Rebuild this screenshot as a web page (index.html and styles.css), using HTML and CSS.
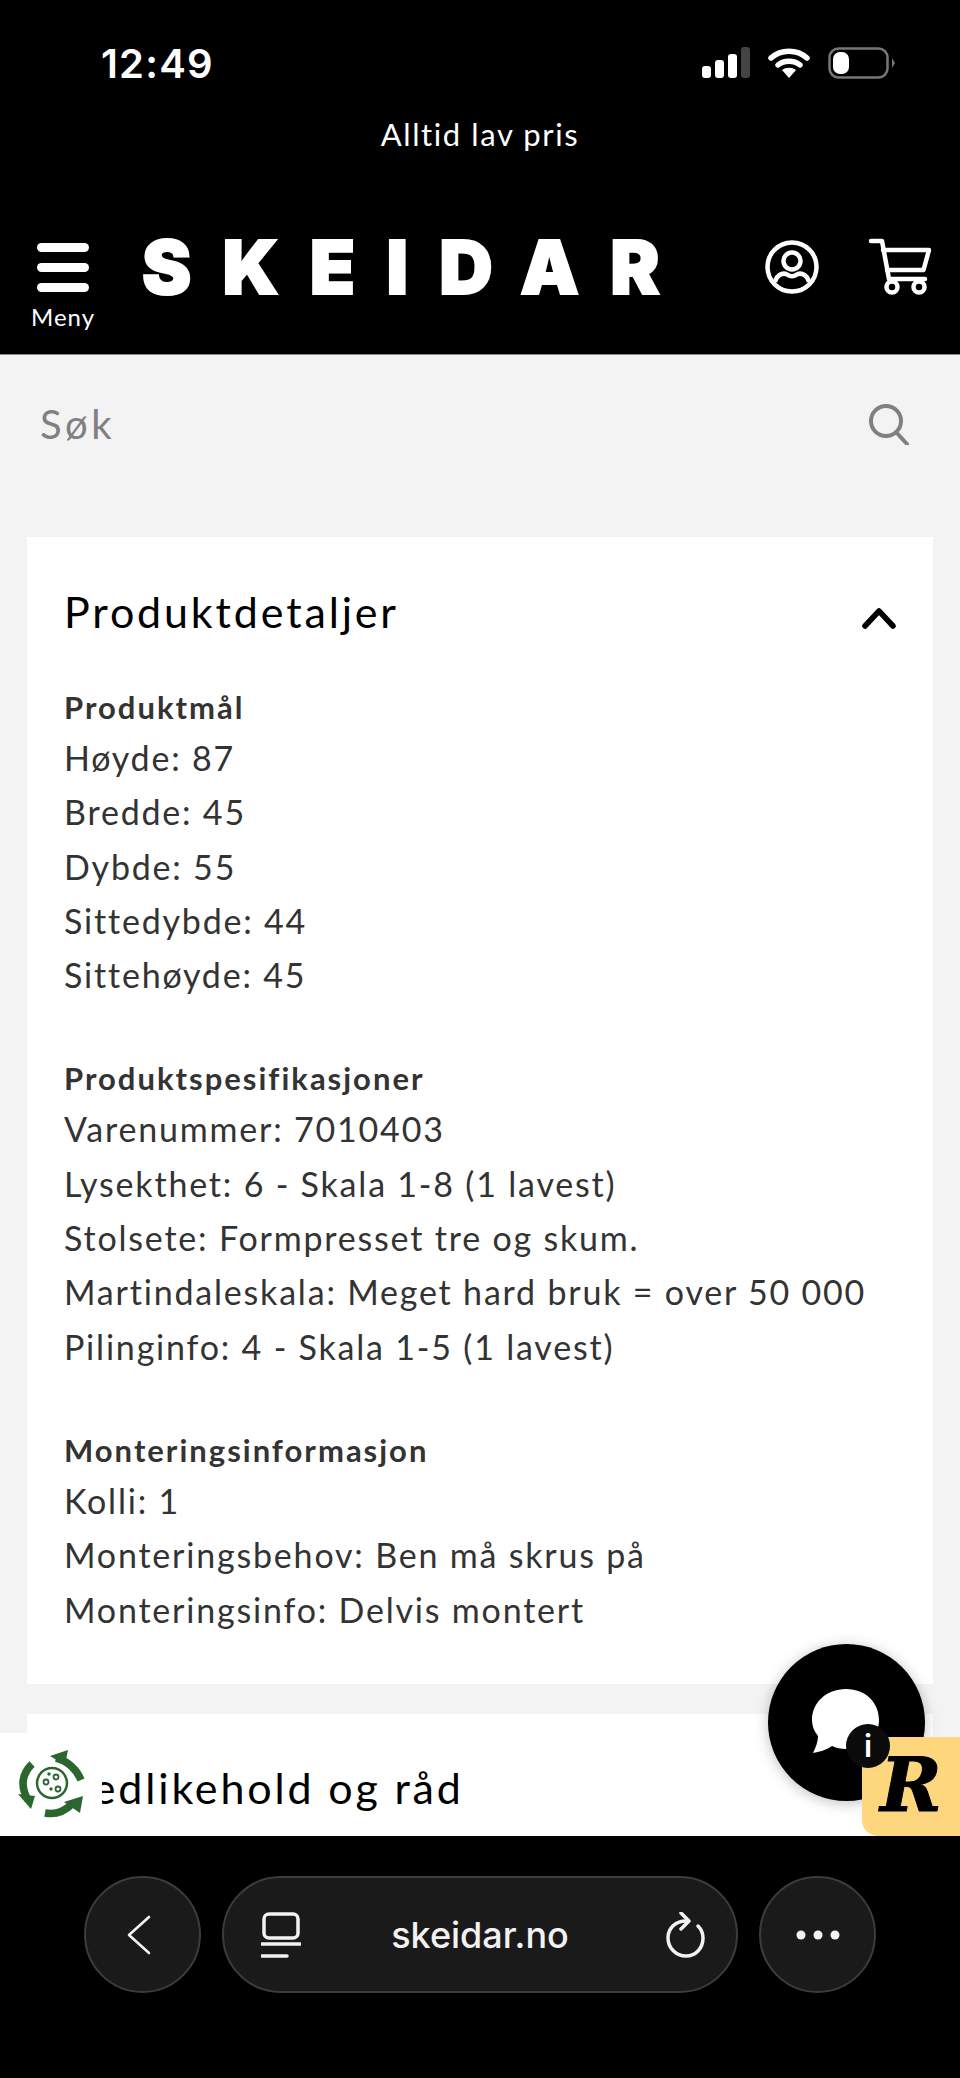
FILE: index.html
```html
<!DOCTYPE html>
<html lang="no">
<head>
<meta charset="utf-8">
<title>Skeidar</title>
<link rel="stylesheet" href="styles.css">
</head>
<body>
<div class="phone">
  <header class="top">
    <div class="status">
      <span class="time">12:49</span>
      <div class="status-icons">
        <svg class="signal" width="50" height="34" viewBox="0 0 50 34"><rect x="0" y="20" width="9" height="12" rx="3" fill="#fff"/><rect x="13" y="14" width="9" height="18" rx="3" fill="#fff"/><rect x="26" y="8" width="9" height="24" rx="3" fill="#fff"/><rect x="39" y="1" width="9" height="31" rx="3" fill="#444"/></svg>
        <svg class="wifi" width="42" height="32" viewBox="0 0 42 32"><path d="M3 11C13 2 29 2 39 11" fill="none" stroke="#fff" stroke-width="5.5" stroke-linecap="round"/><path d="M10 18C16 13 26 13 32 18" fill="none" stroke="#fff" stroke-width="5.5" stroke-linecap="round"/><path d="M14 23C18 20 24 20 28 23L21 31Z" fill="#fff"/></svg>
        <svg class="battery" width="68" height="32" viewBox="0 0 68 32"><rect x="1.5" y="1.5" width="58" height="29" rx="9" fill="none" stroke="#777" stroke-width="2.5"/><rect x="5" y="5" width="16" height="22" rx="7" fill="#fff"/><path d="M64 11L67 16L64 21Z" fill="#777"/></svg>
      </div>
    </div>
    <div class="promo">Alltid lav pris</div>
    <div class="brandbar">
      <div class="menu">
        <span class="bars"><i></i><i></i><i></i></span>
        <span class="menu-label">Meny</span>
      </div>
      <div class="logo">SKEIDAR</div>
      <svg class="profile" width="56" height="56" viewBox="0 0 56 56" fill="none" stroke="#fff" stroke-width="4.5"><circle cx="28" cy="28" r="24.5"/><circle cx="28" cy="22" r="8.5"/><path d="M11 43C13 35 20 33 24 36C26 37.500 30 37.500 32 36C36 33 43 35 45 43"/></svg>
      <svg class="cart" width="66" height="60" viewBox="0 0 66 60" fill="none" stroke="#fff" stroke-width="4.5" stroke-linejoin="round" stroke-linecap="round"><path d="M3 3H14L21 41H57"/><path d="M15 12H61L55.500 32H19"/><circle cx="24" cy="49" r="5.500"/><circle cx="51" cy="49" r="5.500"/></svg>
    </div>
  </header>

  <main class="content">
    <div class="search">
      <span class="search-label">Søk</span>
      <svg width="42" height="42" viewBox="0 0 42 42" fill="none" stroke="#808080" stroke-width="4"><circle cx="18" cy="18" r="15"/><path d="M28 29L39 41" stroke-linecap="round"/></svg>
    </div>

    <section class="card">
      <div class="card-head">
        <h2>Produktdetaljer</h2>
        <svg class="chevron" width="36" height="22" viewBox="0 0 36 22" fill="none" stroke="#000" stroke-width="5.500" stroke-linecap="round" stroke-linejoin="round"><path d="M4 19L18 4L32 19"/></svg>
      </div>
      <div class="spec">
        <h3>Produktmål</h3>
        <p>Høyde: 87</p>
        <p>Bredde: 45</p>
        <p>Dybde: 55</p>
        <p>Sittedybde: 44</p>
        <p>Sittehøyde: 45</p>
      </div>
      <div class="spec">
        <h3>Produktspesifikasjoner</h3>
        <p>Varenummer: 7010403</p>
        <p>Lysekthet: 6 - Skala 1-8 (1 lavest)</p>
        <p>Stolsete: Formpresset tre og skum.</p>
        <p>Martindaleskala: Meget hard bruk = over 50 000</p>
        <p>Pilinginfo: 4 - Skala 1-5 (1 lavest)</p>
      </div>
      <div class="spec">
        <h3>Monteringsinformasjon</h3>
        <p>Kolli: 1</p>
        <p>Monteringsbehov: Ben må skrus på</p>
        <p>Monteringsinfo: Delvis montert</p>
      </div>
    </section>

    <section class="card">
      <div class="card-head">
        <h2>Vedlikehold og råd</h2>
      </div>
    </section>

    <div class="eco">
      <svg width="68" height="68" viewBox="0 0 68 68" fill="none" stroke="#2b662f">
        <g stroke-width="7.500">
          <path d="M38 8C50 11 59 20 63 30"/>
          <path d="M14 14C4 24 2 36 10 50"/>
          <path d="M27 63C38 65 46 62 54 54"/>
        </g>
        <g fill="#2b662f" stroke="none">
          <path d="M32 6L50 0L47 15Z"/>
          <path d="M0 44L17 46L13 59Z"/>
          <path d="M65 46L62 63L46 52Z"/>
        </g>
        <circle cx="34" cy="33" r="15" stroke-width="2.500"/>
        <g stroke-width="1.800">
          <circle cx="28" cy="32" r="2.500"/>
          <circle cx="38" cy="27" r="2.500"/>
          <circle cx="40" cy="39" r="2.500"/>
          <circle cx="31" cy="24" r="0.800"/>
          <circle cx="33" cy="39" r="0.800"/>
        </g>
      </svg>
    </div>

    <div class="chat">
      <svg width="76" height="74" viewBox="0 0 76 74"><path d="M38 3C58 3 71 17 71 34C71 51 57 63 38 63C33 63 28 62 24 60C18 64 11 66 5 67C8 61 10 55 10 50C6 45 4 40 4 34C4 17 18 3 38 3Z" fill="#fff"/></svg>
    </div>
    <div class="review">R</div>
    <div class="info">i</div>
  </main>

  <footer class="browser">
    <button class="round back" aria-label="Tilbake">
      <svg width="24" height="40" viewBox="0 0 24 40" fill="none" stroke="#f2f2f2" stroke-width="2.600" stroke-linecap="round" stroke-linejoin="round"><path d="M22 2L2 20L22 38"/></svg>
    </button>
    <div class="address">
      <svg width="40" height="46" viewBox="0 0 40 46" fill="none" stroke="#f2f2f2" stroke-width="3.500"><rect x="3" y="2" width="34" height="24" rx="5"/><path d="M1 32H39" stroke-linecap="round"/><path d="M1 44H26" stroke-linecap="round"/></svg>
      <span class="url">skeidar.no</span>
      <svg width="40" height="46" viewBox="0 0 40 46" fill="none" stroke="#f2f2f2" stroke-width="3.500" stroke-linecap="round" stroke-linejoin="round"><path d="M22 9C10 8 2 16 2 26C2 36 10 44 20 44C30 44 37 36 37 26C37 21 35 17 32 14"/><path d="M15 1L23 9L15 17"/></svg>
    </div>
    <button class="round" aria-label="Mer">
      <svg width="44" height="12" viewBox="0 0 44 12" fill="#f2f2f2"><circle cx="5" cy="6" r="4.500"/><circle cx="22" cy="6" r="4.500"/><circle cx="39" cy="6" r="4.500"/></svg>
    </button>
  </footer>
</div>
</body>
</html>
```

FILE: styles.css
```css
* { box-sizing: border-box; }
html, body { margin: 0; padding: 0; }
body { background: #000; font-family: "Lato", "Noto Sans", sans-serif; }
.phone { width: 960px; height: 2078px; display: flex; flex-direction: column; overflow: hidden; }

.top { height: 355px; background: #000; color: #fff; flex: none; border-bottom: 1px solid #888; }
.status { height: 100px; padding: 26px 0 0 101px; display: flex; align-items: center; justify-content: space-between; }
.time { font-family: "Inter", sans-serif; font-weight: 600; font-size: 40px; letter-spacing: 1.2px; }
.status-icons { display: flex; align-items: center; margin-right: 64px; }
.signal { margin-right: 16px; }
.wifi { margin-right: 18px; }
.promo { height: 70px; display: flex; align-items: center; justify-content: center; font-size: 31px; font-weight: 400; letter-spacing: 1.6px; padding-bottom: 2px; }
.brandbar { margin-top: 64px; padding-left: 31px; display: flex; align-items: flex-start; }
.menu { width: 64px; display: flex; flex-direction: column; align-items: center; }
.bars { display: flex; flex-direction: column; gap: 11px; margin-top: 9px; }
.bars i { display: block; width: 52px; height: 9px; border-radius: 5px; background: #fff; }
.menu-label { font-size: 24px; line-height: 30px; margin-top: 10px; letter-spacing: 1px; }
.logo { margin-left: 47px; margin-top: 2px; width: 622px; font-family: "Inter", sans-serif; font-weight: 900; font-size: 74px; line-height: 62px; letter-spacing: 31.2px; white-space: nowrap; -webkit-text-stroke: 2px #fff; }
.profile { margin-top: 5px; }
.cart { margin-left: 48px; margin-top: 4px; }

.content { position: relative; flex: 1; min-height: 0; background: #f3f3f3; overflow: hidden; }
.search { height: 137px; padding: 0 50px 0 40px; display: flex; align-items: center; justify-content: space-between; margin-bottom: 45px; }
.search-label { font-size: 40px; color: #808080; letter-spacing: 3.5px; }
.card { background: #fff; margin: 0 27px 30px; padding: 44px 38px 47px 37px; }
.card-head { height: 60px; display: flex; align-items: center; justify-content: space-between; margin-bottom: 42px; }
.card-head h2 { margin: 0; font-size: 43px; font-weight: 400; color: #000; letter-spacing: 2.85px; }
.chevron { margin-right: -2px; margin-top: 14px; }
.spec { margin-bottom: 52px; color: #333; }
.spec:last-child { margin-bottom: 0; }
.spec h3 { margin: 0; font-size: 31px; line-height: 48px; font-weight: 700; letter-spacing: 2px; }
.spec p { margin: 0; font-size: 34px; line-height: 54.3px; letter-spacing: 1.8px; }

.eco { position: absolute; left: 0; bottom: 0; width: 102px; height: 103px; background: #fff; padding: 17px 0 0 18px; }
.chat { position: absolute; left: 768px; top: 1289px; width: 157px; height: 157px; border-radius: 50%; background: #000; box-shadow: 0 2px 14px rgba(0,0,0,.25); display: flex; align-items: center; justify-content: center; padding-right: 2px; }
.review { position: absolute; right: 0; bottom: 0; width: 98px; height: 99px; background: #fed67e; border-radius: 0 0 0 16px; font-family: "DejaVu Serif", serif; font-weight: 700; font-style: italic; font-size: 74px; line-height: 96px; text-align: center; color: #000; -webkit-text-stroke: 1px #000; }
.info { position: absolute; left: 846px; top: 1369px; width: 44px; height: 44px; border-radius: 50%; background: #0b0b0b; color: #fff; font-family: "Inter", sans-serif; font-weight: 600; font-size: 31px; line-height: 44px; text-align: center; }

.browser { height: 242px; flex: none; background: #000; padding: 40px 84px 0; display: flex; align-items: flex-start; gap: 21px; }
.round { width: 117px; height: 117px; flex: none; padding: 0; border-radius: 50%; background: #1a1a1a; border: 2px solid #3c3c3c; display: flex; align-items: center; justify-content: center; }
.round.back { padding-right: 7px; }
.address { flex: 1; height: 117px; border-radius: 59px; background: #1a1a1a; border: 2px solid #3c3c3c; padding: 0 30px 0 37px; display: flex; align-items: center; justify-content: space-between; }
.url { font-family: "Inter", sans-serif; font-size: 36px; font-weight: 500; color: #f2f2f2; margin-right: 7px; }
```
